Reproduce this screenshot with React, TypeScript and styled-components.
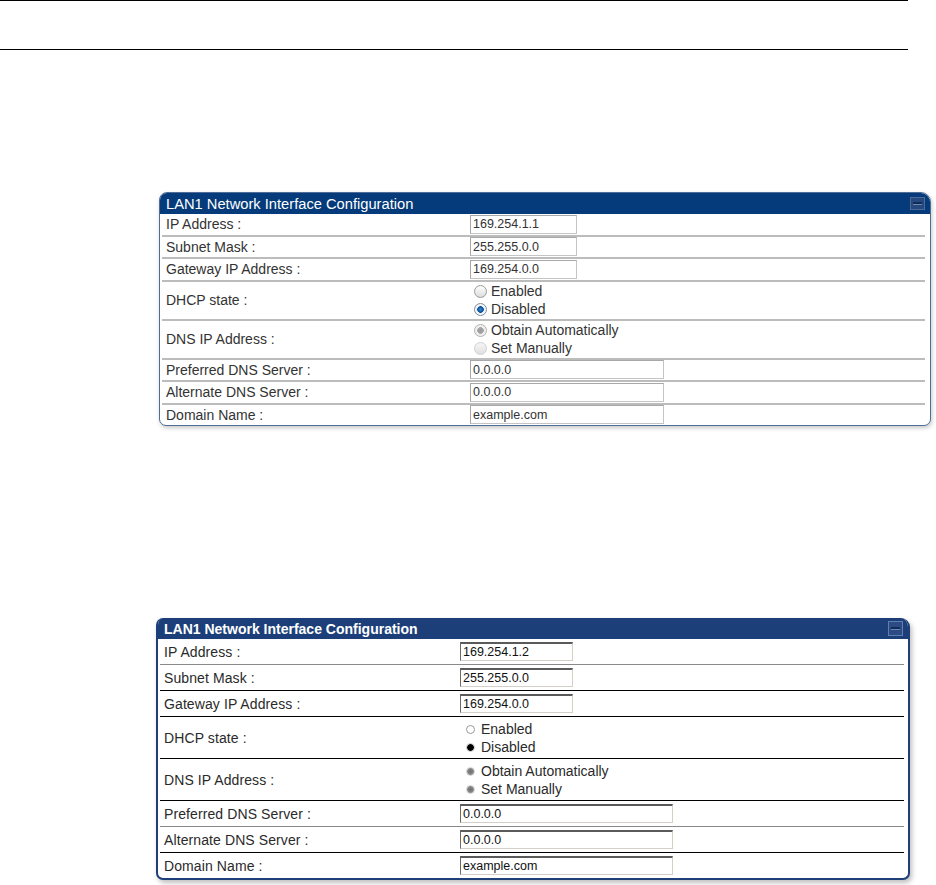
import React from 'react';
import styled, { createGlobalStyle, css } from 'styled-components';

type Variant = 'modern' | 'legacy';
type RadioState = 'off' | 'on' | 'dimOn' | 'dimOff';

interface Field {
    label: string;
    kind: 'input' | 'radio';
    value?: string;
    wide?: boolean;
    options?: { text: string; state: RadioState }[];
}

const GlobalStyle = createGlobalStyle`
    body {
        margin: 0;
        background: #ffffff;
        font-family: "Liberation Sans", Arial, sans-serif;
    }
`;

const buildFields = (ip: string, variant: Variant): Field[] => [
    { label: 'IP Address :', kind: 'input', value: ip },
    { label: 'Subnet Mask :', kind: 'input', value: '255.255.0.0' },
    { label: 'Gateway IP Address :', kind: 'input', value: '169.254.0.0' },
    {
        label: 'DHCP state :',
        kind: 'radio',
        options: [
            { text: 'Enabled', state: 'off' },
            { text: 'Disabled', state: 'on' },
        ],
    },
    {
        label: 'DNS IP Address :',
        kind: 'radio',
        options: [
            { text: 'Obtain Automatically', state: 'dimOn' },
            { text: 'Set Manually', state: variant === 'legacy' ? 'dimOn' : 'dimOff' },
        ],
    },
    { label: 'Preferred DNS Server :', kind: 'input', value: '0.0.0.0', wide: true },
    { label: 'Alternate DNS Server :', kind: 'input', value: '0.0.0.0', wide: true },
    { label: 'Domain Name :', kind: 'input', value: 'example.com', wide: true },
];

// separator colour below each row in the older rendering
const legacyLines = ['#8a8a8a', '#000', '#000', '#000', '#000', '#8a8a8a', '#000', 'transparent'];

interface PanelProps {
    variant: Variant;
    ip: string;
}

const ConfigPanel: React.FC<PanelProps> = ({ variant, ip }) => {
    const fields = buildFields(ip, variant);
    return (
        <Panel $v={variant}>
            <Header $v={variant}>
                <Title $v={variant}>LAN1 Network Interface Configuration</Title>
                <MinButton $v={variant} />
            </Header>
            {fields.map((f, i) => (
                <Row
                    key={f.label}
                    $v={variant}
                    $tall={f.kind === 'radio'}
                    $line={variant === 'legacy' ? legacyLines[i] : '#bcbcbc'}
                >
                    <Label $v={variant}>{f.label}</Label>
                    {f.kind === 'input' ? (
                        <TextBox $v={variant} $wide={!!f.wide} value={f.value} readOnly />
                    ) : (
                        <RadioGroup $v={variant}>
                            {f.options!.map((o) => (
                                <RadioLine key={o.text} $v={variant}>
                                    <RadioDot $v={variant} $state={o.state} />
                                    <RadioText $v={variant}>{o.text}</RadioText>
                                </RadioLine>
                            ))}
                        </RadioGroup>
                    )}
                </Row>
            ))}
        </Panel>
    );
};

export default function App(): React.ReactElement {
    return (
        <Page>
            <GlobalStyle />
            <Rule />
            <Rule $gap={48} />
            <PanelSlot $top={142} $left={159}>
                <ConfigPanel variant="modern" ip="169.254.1.1" />
            </PanelSlot>
            <PanelSlot $top={192} $left={156}>
                <ConfigPanel variant="legacy" ip="169.254.1.2" />
            </PanelSlot>
        </Page>
    );
}

const Page = styled.div`
    width: 936px;
    min-height: 885px;
`;

const Rule = styled.div<{ $gap?: number }>`
    width: 908px;
    height: 1px;
    background: #000;
    margin-top: ${(p) => p.$gap ?? 0}px;
`;

const PanelSlot = styled.div<{ $top: number; $left: number }>`
    margin-top: ${(p) => p.$top}px;
    margin-left: ${(p) => p.$left}px;
`;

const Panel = styled.section<{ $v: Variant }>`
    background: #ffffff;
    overflow: hidden;
    ${(p) =>
        p.$v === 'modern'
            ? css`
                  width: 770px;
                  border: 1px solid #4f6d96;
                  border-radius: 8px 10px 7px 7px;
                  box-shadow: 1px 2px 4px rgba(0, 0, 0, 0.22);
              `
            : css`
                  width: 750px;
                  border: 2px solid #1f3f78;
                  border-top-width: 0;
                  border-radius: 7px 9px 7px 7px;
                  box-shadow: 2px 3px 5px rgba(0, 0, 0, 0.25);
              `}
`;

const Header = styled.header<{ $v: Variant }>`
    height: 21px;
    display: flex;
    align-items: center;
    justify-content: space-between;
    ${(p) =>
        p.$v === 'modern'
            ? css`
                  padding: 0 5px 0 6px;
                  background: #053b7a;
              `
            : css`
                  margin: 0 -2px;
                  padding: 0 7px 0 8px;
                  background: #1d3f79;
              `}
`;

const Title = styled.h3<{ $v: Variant }>`
    margin: 0;
    color: #ffffff;
    font-size: ${(p) => (p.$v === 'modern' ? '14.7px' : '14px')};
    font-weight: ${(p) => (p.$v === 'modern' ? 400 : 700)};
    white-space: nowrap;
`;

const MinButton = styled.span<{ $v: Variant }>`
    position: relative;
    width: 15px;
    height: ${(p) => (p.$v === 'modern' ? 13 : 15)}px;
    box-sizing: border-box;
    border: 1px solid ${(p) => (p.$v === 'modern' ? '#4c6a96' : '#5f7fb0')};
    background: ${(p) => (p.$v === 'modern' ? '#25497f' : '#2c4b85')};
    &::after {
        content: '';
        position: absolute;
        left: 2px;
        right: 2px;
        top: ${(p) => (p.$v === 'modern' ? 4 : 5)}px;
        height: 2px;
        background: #102c58;
        border-bottom: 1px solid #6d87b0;
    }
`;

const Row = styled.div<{ $v: Variant; $tall: boolean; $line: string }>`
    display: grid;
    align-items: center;
    ${(p) =>
        p.$v === 'modern'
            ? css`
                  grid-template-columns: 304px 1fr;
                  margin: 0 5px 0 2px;
                  padding-left: 4px;
                  min-height: ${p.$tall ? 37 : 20.5}px;
                  border-bottom: 2px solid ${p.$line};
              `
            : css`
                  grid-template-columns: 296px 1fr;
                  margin: 0 4px 0 2px;
                  padding-left: 4px;
                  min-height: ${p.$tall ? 41 : 25}px;
                  border-bottom: 1px solid ${p.$line};
              `}
    &:last-child {
        border-bottom: none;
    }
`;

const Label = styled.span<{ $v: Variant }>`
    font-size: 14px;
    color: ${(p) => (p.$v === 'modern' ? '#333333' : '#2a2a2a')};
    letter-spacing: ${(p) => (p.$v === 'modern' ? '0' : '0.1px')};
    white-space: nowrap;
`;

const TextBox = styled.input<{ $v: Variant; $wide: boolean }>`
    box-sizing: border-box;
    height: 19px;
    margin: 0;
    padding: 0 2px;
    font-family: "Liberation Sans", Arial, sans-serif;
    font-size: 12.5px;
    color: #333;
    background: #fff;
    outline: none;
    ${(p) =>
        p.$v === 'modern'
            ? css`
                  width: ${p.$wide ? 194 : 107}px;
                  border: 1px solid #c4c4c4;
                  border-top-color: #a8a8a8;
                  border-left-color: #a8a8a8;
              `
            : css`
                  width: ${p.$wide ? 213 : 113}px;
                  border: 1px solid #d4d0c8;
                  border-top: 2px solid #5a5a5a;
                  border-left-color: #6a6a6a;
                  color: #111;
              `}
`;

const RadioGroup = styled.div<{ $v: Variant }>`
    display: flex;
    flex-direction: column;
    padding: ${(p) => (p.$v === 'modern' ? '0.5px 0 0.5px 4px' : '3px 0 2px 5px')};
`;

const RadioLine = styled.label<{ $v: Variant }>`
    display: flex;
    align-items: center;
    gap: 4px;
    height: 18px;
`;

const RadioText = styled.span<{ $v: Variant }>`
    font-size: 14px;
    color: ${(p) => (p.$v === 'modern' ? '#333333' : '#2a2a2a')};
    white-space: nowrap;
`;

const modernDot = (s: RadioState) => {
    switch (s) {
        case 'on':
            return css`
                border-color: #7d8c9c;
                background: radial-gradient(circle, #2f8ad8 0, #0a4f96 3px, #e8eef4 3.6px, #ffffff 6px);
            `;
        case 'dimOn':
            return css`
                border-color: #b0b0b0;
                background: radial-gradient(circle, #9a9a9a 0, #a8a8a8 3px, #ececec 3.6px, #f6f6f6 6px);
            `;
        case 'dimOff':
            return css`
                border-color: #d0d0d0;
                background: linear-gradient(#f6f6f6, #e0e0e0);
            `;
        default:
            return css`
                border-color: #9a9a9a;
                background: linear-gradient(#ffffff, #dcdcdc);
            `;
    }
};

const legacyDot = (s: RadioState) => {
    switch (s) {
        case 'on':
            return css`
                border-color: #c8c8c8;
                background: radial-gradient(circle, #000 0, #000 3.2px, #cfcfcf 3.8px);
            `;
        case 'dimOn':
            return css`
                border-color: #d0d0d0;
                background: radial-gradient(circle, #6e6e6e 0, #8a8a8a 3.2px, #d6d6d6 3.8px);
            `;
        case 'dimOff':
            return css`
                border-color: #d6d6d6;
                background: #c8c8c8;
            `;
        default:
            return css`
                border-color: #9a9a9a;
                background: #ffffff;
            `;
    }
};

const RadioDot = styled.span<{ $v: Variant; $state: RadioState }>`
    display: inline-block;
    box-sizing: border-box;
    border-radius: 50%;
    border: 1px solid #999;
    ${(p) =>
        p.$v === 'modern'
            ? css`
                  width: 13px;
                  height: 13px;
                  ${modernDot(p.$state)}
              `
            : css`
                  width: 9px;
                  height: 9px;
                  margin: 0 2px 0 1px;
                  ${legacyDot(p.$state)}
              `}
`;
